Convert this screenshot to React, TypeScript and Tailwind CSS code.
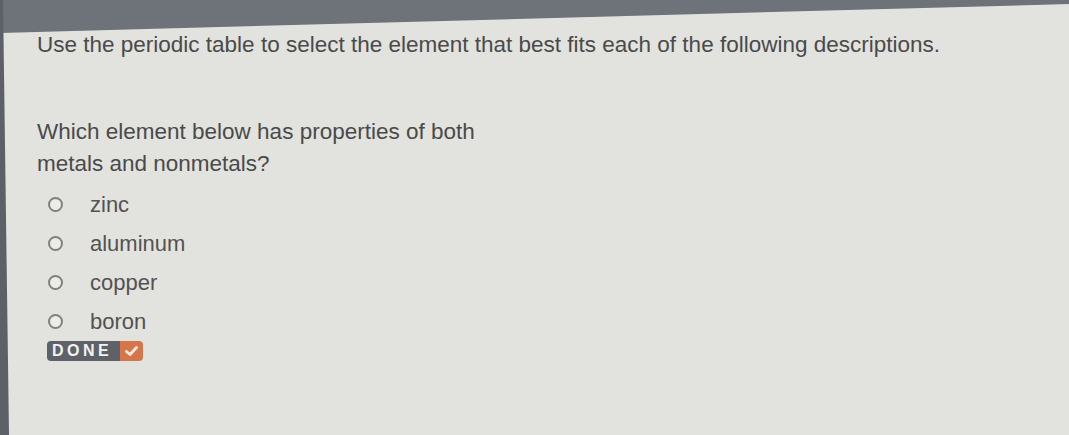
import React from 'react';

const options = ['zinc', 'aluminum', 'copper', 'boron'];

const App: React.FC = () => {
  return (
    <div
      className="relative w-full h-[435px] overflow-hidden bg-[#e2e2de] text-[#4a4a4a]"
      style={{ fontFamily: '"Liberation Sans", Arial, sans-serif' }}
    >
      {/* monitor bezel at the top and left, seen at an angle */}
      <div className="absolute left-0 top-0 w-full h-[33px] bg-[#6e7279] [clip-path:polygon(0_0,100%_0,100%_4px,0_100%)]" />
      <div className="absolute left-0 top-0 h-full w-[9px] bg-[#5d6066] [clip-path:polygon(0_0,3px_0,100%_100%,0_100%)]" />

      <div className="pl-[37px] pt-[32px]">
        <p className="text-[22.5px] leading-[26px]">
          Use the periodic table to select the element that best fits each of the following descriptions.
        </p>

        <p className="mt-[58px] text-[22.5px] leading-[32px] w-[455px]">
          Which element below has properties of both metals and nonmetals?
        </p>

        <div className="mt-[5px] flex flex-col">
          {options.map((opt) => (
            <label key={opt} className="flex items-center h-[39px] pl-[11px] cursor-pointer">
              <span className="w-[15px] h-[15px] rounded-full border-2 border-[#808080] bg-[#ecece8]" />
              <span className="ml-[27px] text-[22px] leading-[39px] text-[#525252]">{opt}</span>
            </label>
          ))}
        </div>

        <button className="ml-[10px] flex items-stretch h-[20px] rounded-[4px] overflow-hidden">
          <span className="flex items-center pl-[5px] pr-[8px] bg-[#5e6168] text-[#f2f2f2] text-[16px] font-bold tracking-[3.5px]">
            DONE
          </span>
          <span className="flex items-center justify-center w-[23px] bg-[#d4764a]">
            <svg width="13" height="11" viewBox="0 0 13 11" fill="none">
              <path d="M1.5 5.5 L5 8.5 L11.5 1.5" stroke="#fbe9df" strokeWidth="2.8" strokeLinecap="round" strokeLinejoin="round" />
            </svg>
          </span>
        </button>
      </div>
    </div>
  );
};

export default App;
